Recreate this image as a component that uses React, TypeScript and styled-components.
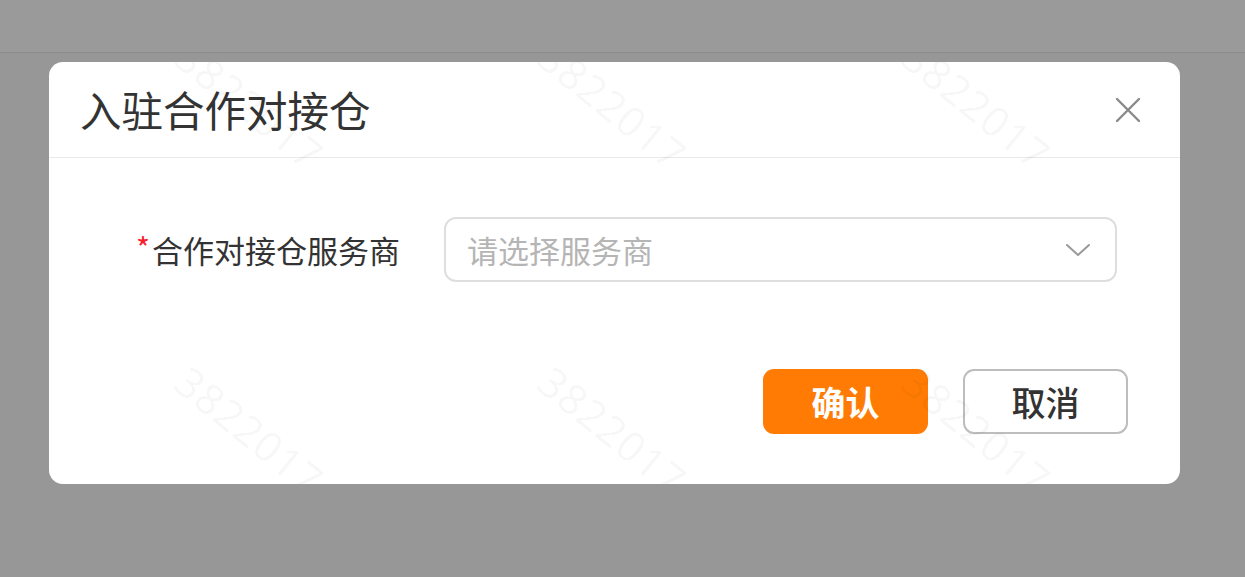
import React from "react";
import styled, { createGlobalStyle } from "styled-components";

const Global = createGlobalStyle`
  html, body { margin: 0; padding: 0; }
  body {
    background: #979797;
    font-family: "Noto Sans CJK SC", "Noto Sans", sans-serif;
    width: 1245px;
    height: 577px;
    overflow: hidden;
  }
`;

const Page = styled.div`
  display: flex;
  flex-direction: column;
  width: 1245px;
  height: 577px;
`;

const TopBar = styled.div`
  height: 52px;
  background: #9a9a9a;
  border-bottom: 1px solid #8b8b8b;
  flex-shrink: 0;
`;

const Modal = styled.div`
  position: relative;
  margin: 9px 0 0 49px;
  width: 1131px;
  height: 422px;
  background: #ffffff;
  border-radius: 14px;
  overflow: hidden;
  display: flex;
  flex-direction: column;
`;

const Header = styled.div`
  height: 95px;
  border-bottom: 1px solid #e9e9e9;
  display: flex;
  align-items: center;
  justify-content: space-between;
  padding: 0 39px 0 31px;
`;

const Title = styled.div`
  font-size: 41.5px;
  color: #333333;
  line-height: 1;
`;

const CloseBtn = styled.div`
  width: 26px;
  height: 26px;
  display: flex;
  align-items: center;
  justify-content: center;
`;

const Body = styled.div`
  flex: 1;
  display: flex;
  flex-direction: column;
  padding: 59px 63px 49px 0;
`;

const FormRow = styled.div`
  display: flex;
  align-items: center;
  height: 65px;
`;

const Label = styled.div`
  width: 351px;
  flex-shrink: 0;
  text-align: right;
  font-size: 31px;
  color: #333333;
  line-height: 1;
  white-space: nowrap;
`;

const Star = styled.span`
  color: #f5222d;
  font-size: 30px;
  margin-right: 2px;
  position: relative;
  top: -3px;
`;

const Select = styled.div`
  margin-left: 44px;
  flex: 1;
  height: 65px;
  box-sizing: border-box;
  border: 2px solid #dedede;
  border-radius: 12px;
  display: flex;
  align-items: center;
  justify-content: space-between;
  padding: 0 24px 0 21px;
`;

const Placeholder = styled.span`
  font-size: 31px;
  color: #b5b5b5;
  line-height: 1;
`;

const Footer = styled.div`
  margin-top: 87px;
  display: flex;
  justify-content: flex-end;
  gap: 35px;
  margin-right: -11px;
`;

const Button = styled.button<{ $primary?: boolean }>`
  width: 165px;
  height: 65px;
  box-sizing: border-box;
  border-radius: 11px;
  font-family: "Noto Sans CJK SC", "Noto Sans", sans-serif;
  font-size: 34px;
  line-height: 1;
  padding: 0;
  cursor: pointer;
  background: ${(p) => (p.$primary ? "#ff7b04" : "#ffffff")};
  color: ${(p) => (p.$primary ? "#ffffff" : "#333333")};
  border: ${(p) => (p.$primary ? "none" : "2px solid #bdbdbd")};
  font-weight: ${(p) => (p.$primary ? 700 : 500)};
`;

const Watermark = styled.div`
  position: absolute;
  transform: translate(-50%, -50%) rotate(39deg);
  font-family: "Noto Sans", sans-serif;
  font-size: 42px;
  color: rgba(0, 0, 0, 0.035);
  pointer-events: none;
  white-space: nowrap;
  letter-spacing: 1px;
`;

const marks = [
  { x: 201, y: 43 },
  { x: 564, y: 43 },
  { x: 928, y: 43 },
  { x: 201, y: 368 },
  { x: 564, y: 368 },
  { x: 928, y: 368 },
];

export default function App() {
  return (
    <>
      <Global />
      <Page>
        <TopBar />
        <Modal>
          <Header>
            <Title>入驻合作对接仓</Title>
            <CloseBtn>
              <svg width="26" height="26" viewBox="0 0 26 26">
                <path d="M2 2 L24 24 M24 2 L2 24" stroke="#8a8a8a" strokeWidth="2.4" strokeLinecap="round" />
              </svg>
            </CloseBtn>
          </Header>
          <Body>
            <FormRow>
              <Label>
                <Star>*</Star>合作对接仓服务商
              </Label>
              <Select>
                <Placeholder>请选择服务商</Placeholder>
                <svg width="26" height="14" viewBox="0 0 26 14">
                  <path d="M2 2 L13 12 L24 2" fill="none" stroke="#9a9a9a" strokeWidth="2" strokeLinecap="round" strokeLinejoin="round" />
                </svg>
              </Select>
            </FormRow>
            <Footer>
              <Button $primary>确认</Button>
              <Button>取消</Button>
            </Footer>
          </Body>
          {marks.map((m, i) => (
            <Watermark key={i} style={{ left: m.x, top: m.y }}>
              3822017
            </Watermark>
          ))}
        </Modal>
      </Page>
    </>
  );
}
